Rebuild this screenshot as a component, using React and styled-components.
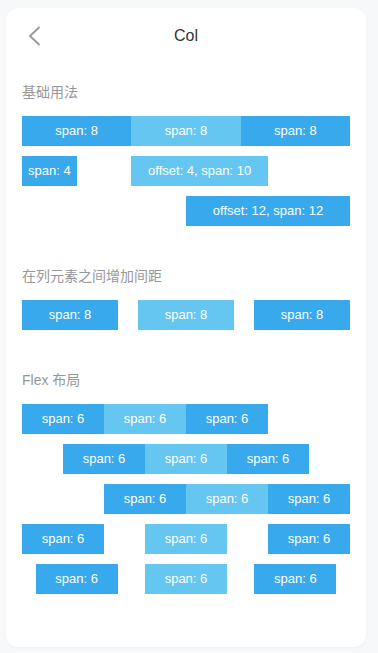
import React from "react";
import styled, { createGlobalStyle } from "styled-components";

const Global = createGlobalStyle`
  html, body { margin: 0; padding: 0; background: #f7f8fa; }
  body { font-family: "Liberation Sans", Arial, "Noto Sans CJK SC", sans-serif; }
  * { box-sizing: border-box; }
`;

const Page = styled.div`
  padding: 8px 12px 6px 6px;
`;

const Card = styled.div`
  width: 360px;
  height: 639px;
  background: #fff;
  border-radius: 12px;
  padding: 0 16px;
  box-shadow: 0 1px 3px rgba(0, 0, 0, 0.04);
`;

const Header = styled.div`
  height: 54px;
  display: grid;
  grid-template-columns: 1fr auto 1fr;
  align-items: center;
`;

const Back = styled.div`
  display: flex;
  align-items: center;
  padding-left: 5px;
  padding-top: 2px;
`;

const Title = styled.div`
  font-size: 16px;
  color: #323233;
  line-height: 22px;
  padding-top: 2px;
`;

const SectionTitle = styled.div`
  font-size: 14px;
  line-height: 16px;
  color: #969799;
  padding: ${(p) => (p.$first ? "22px" : "32px")} 0 16px;
  font-family: "Liberation Sans", Arial, "Noto Sans CJK SC", sans-serif;
`;

const Row = styled.div`
  display: flex;
  justify-content: ${(p) => p.$justify || "flex-start"};
  gap: ${(p) => p.$gap || 0}px;
  margin-bottom: 10px;
`;

const Col = styled.div`
  flex: ${(p) => (p.$grow ? "1 1 0" : "none")};
  width: ${(p) => (p.$grow ? "auto" : `calc(100% * ${p.$span} / 24)`)};
  margin-left: ${(p) => (p.$offset ? `calc(100% * ${p.$offset} / 24)` : "0")};
  height: 30px;
  line-height: 30px;
  text-align: center;
  color: #fff;
  font-size: 13px;
  background: ${(p) => (p.$light ? "#66c6f2" : "#39a9ed")};
  white-space: nowrap;
`;

const Chevron = () => (
  <svg width="14" height="20" viewBox="0 0 14 20" fill="none">
    <polyline
      points="12,1.5 3,10 12,18.5"
      stroke="#969799"
      strokeWidth="1.8"
      strokeLinecap="round"
      strokeLinejoin="round"
    />
  </svg>
);

const flexRows = ["flex-start", "center", "flex-end", "space-between", "space-around"];

export default function App() {
  return (
    <>
      <Global />
      <Page>
        <Card>
          <Header>
            <Back>
              <Chevron />
            </Back>
            <Title>Col</Title>
            <div />
          </Header>

          <SectionTitle $first>基础用法</SectionTitle>
          <Row>
            <Col $span={8}>span: 8</Col>
            <Col $span={8} $light>span: 8</Col>
            <Col $span={8}>span: 8</Col>
          </Row>
          <Row>
            <Col $span={4}>span: 4</Col>
            <Col $span={10} $offset={4} $light>offset: 4, span: 10</Col>
          </Row>
          <Row>
            <Col $span={12} $offset={12}>offset: 12, span: 12</Col>
          </Row>

          <SectionTitle>在列元素之间增加间距</SectionTitle>
          <Row $gap={20}>
            <Col $grow>span: 8</Col>
            <Col $grow $light>span: 8</Col>
            <Col $grow>span: 8</Col>
          </Row>

          <SectionTitle>Flex 布局</SectionTitle>
          {flexRows.map((j) => (
            <Row key={j} $justify={j}>
              <Col $span={6}>span: 6</Col>
              <Col $span={6} $light>span: 6</Col>
              <Col $span={6}>span: 6</Col>
            </Row>
          ))}
        </Card>
      </Page>
    </>
  );
}
